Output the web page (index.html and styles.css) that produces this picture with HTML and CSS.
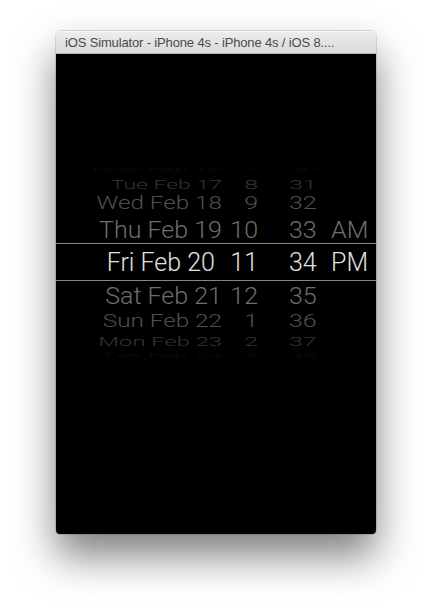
FILE: index.html
```html
<!DOCTYPE html>
<html>
<head>
<meta charset="utf-8">
<link rel="stylesheet" href="styles.css">
</head>
<body>
<div class="window">
  <div class="titlebar"><span class="title">iOS Simulator - iPhone 4s - iPhone 4s / iOS 8....</span></div>
  <div class="screen">
    <div class="picker">
      <div class="row r-far"><span class="c-date">Mon Feb 16</span><span class="c-hour">7</span><span class="c-min">30</span><span class="c-ampm"></span></div>
      <div class="row r-3 top"><span class="c-date">Tue Feb 17</span><span class="c-hour">8</span><span class="c-min">31</span><span class="c-ampm"></span></div>
      <div class="row r-2"><span class="c-date">Wed Feb 18</span><span class="c-hour">9</span><span class="c-min">32</span><span class="c-ampm"></span></div>
      <div class="row r-1"><span class="c-date">Thu Feb 19</span><span class="c-hour">10</span><span class="c-min">33</span><span class="c-ampm">AM</span></div>
      <div class="row r-sel"><span class="c-date">Fri Feb 20</span><span class="c-hour">11</span><span class="c-min">34</span><span class="c-ampm">PM</span></div>
      <div class="row r-1 low"><span class="c-date">Sat Feb 21</span><span class="c-hour">12</span><span class="c-min">35</span><span class="c-ampm"></span></div>
      <div class="row r-2 low"><span class="c-date">Sun Feb 22</span><span class="c-hour">1</span><span class="c-min">36</span><span class="c-ampm"></span></div>
      <div class="row r-3 low"><span class="c-date">Mon Feb 23</span><span class="c-hour">2</span><span class="c-min">37</span><span class="c-ampm"></span></div>
      <div class="row r-far low"><span class="c-date">Tue Feb 24</span><span class="c-hour">3</span><span class="c-min">38</span><span class="c-ampm"></span></div>
    </div>
  </div>
</div>
</body>
</html>
```
FILE: styles.css
```css
html, body {
  margin: 0;
  padding: 0;
  background: #ffffff;
}
body {
  width: 432px;
  height: 614px;
  overflow: hidden;
}
.window {
  width: 320px;
  margin: 31px auto 0;
  border-radius: 5px 5px 4px 4px;
  box-shadow: 0 22px 40px rgba(0, 0, 0, 0.5), 0 0 0 1px rgba(0, 0, 0, 0.12);
}
.titlebar {
  height: 23px;
  box-sizing: border-box;
  border-radius: 5px 5px 0 0;
  background: linear-gradient(#ededed, #d9d9d9);
  border-top: 1px solid #f4f4f4;
  border-bottom: 1px solid #b8b8b8;
  padding-left: 9px;
  display: flex;
  align-items: center;
  font-family: "Liberation Sans", Arial, sans-serif;
  font-size: 13px;
  letter-spacing: -0.15px;
  color: #4a4a4a;
  white-space: nowrap;
  overflow: hidden;
}
.screen {
  height: 480px;
  background: #000;
  border-radius: 0 0 4px 4px;
  overflow: hidden;
}
.picker {
  padding-top: 108px;
  display: flex;
  flex-direction: column;
  font-family: Roboto, "Liberation Sans", sans-serif;
  font-weight: 300;
  font-size: 25px;
  letter-spacing: 0;
}
.row {
  display: grid;
  grid-template-columns: 166px 36px 73px 45px;
  align-items: center;
  white-space: nowrap;
  line-height: 1;
}
.c-date { text-align: right; transform-origin: right center; }
.c-hour { text-align: right; }
.c-min { padding-left: 31px; }
.c-ampm { padding-left: 0; }

.r-far { height: 13px; color: #0e0e0e; transform: scaleY(0.2); }
.r-3 { height: 16px; color: #343434; transform: scaleY(0.48); }
.r-2 { height: 24px; color: #505050; transform: scaleY(0.72); }
.r-1 { height: 28px; color: #6e6e6e; transform: scaleY(0.95); }
.r-1.low { height: 28px; }
.r-2.low { height: 23px; }
.r-3.low { height: 16px; }
.r-far.low { height: 13px; }
.r-3 .c-date { transform: scaleX(0.92); }
.r-3.low .c-date { transform: scaleX(0.95); }
.r-2 .c-date { transform: scaleX(0.97); }
.r-sel {
  height: 36px;
  color: #e2e2e2;
  border-top: 1px solid #858585;
  border-bottom: 1px solid #858585;
}
.r-sel .c-date { padding-right: 7px; }
```
